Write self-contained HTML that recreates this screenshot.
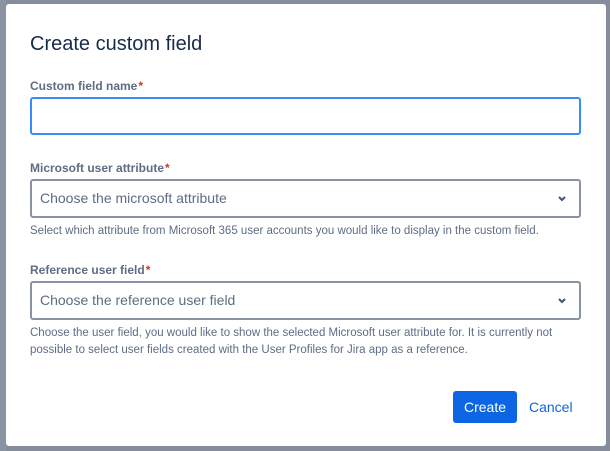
<!DOCTYPE html>
<html><head><style>
*{box-sizing:border-box;margin:0;padding:0}
body{width:610px;height:451px;background:#858d9c;font-family:"Liberation Sans",sans-serif;position:relative;overflow:hidden}
.bg{position:absolute;left:0;top:0;width:6px;height:451px;background:#8a93a2}
.dlg{position:absolute;left:6px;top:4px;width:600px;height:442px;background:#fff;border-radius:3px}
.t{position:absolute;left:24px;top:29px;font-size:20px;color:#172b4d}
.l{position:absolute;left:24px;font-size:12px;font-weight:bold;color:#5e6c84}
.l span{color:#de350b;margin-left:1px}
.in{position:absolute;left:24px;width:551px;border:2px solid #8993a4;border-radius:3px;background:#fff;font-size:14px;color:#5e6c84;padding-left:8px}
.in.f{border-color:#388bff}
.h{position:absolute;left:24px;font-size:11.5px;color:#5e6c84;line-height:17px;width:545px}
.chev{position:absolute;right:12px;top:14px}
.btn{position:absolute;left:447px;top:387px;width:64px;height:32px;background:#0c66e4;border-radius:3px;color:#fff;font-size:14px;text-align:center;line-height:32px}
.c{position:absolute;left:523px;top:387px;line-height:32px;font-size:14px;color:#0c66e4}
</style></head><body>
<div class="bg"></div>
<div class="dlg">
<div class="t">Create custom field</div>
<div class="l" style="top:75px">Custom field name<span>*</span></div>
<div class="in f" style="top:93px;height:38px"></div>
<div class="l" style="top:157px">Microsoft user attribute<span>*</span></div>
<div class="in" style="top:175px;height:39px;line-height:35px">Choose the microsoft attribute<svg class="chev" width="10" height="8" viewBox="0 0 10 8"><path d="M2 2 L5 5 L8 2" stroke="#42526e" stroke-width="2" fill="none"/></svg></div>
<div class="h" style="top:219px">Select which attribute from Microsoft 365 user accounts you would like to display in the custom field.</div>
<div class="l" style="top:259px">Reference user field<span>*</span></div>
<div class="in" style="top:277px;height:39px;line-height:35px">Choose the reference user field<svg class="chev" width="10" height="8" viewBox="0 0 10 8"><path d="M2 2 L5 5 L8 2" stroke="#42526e" stroke-width="2" fill="none"/></svg></div>
<div class="h" style="top:321px">Choose the user field, you would like to show the selected Microsoft user attribute for. It is currently not possible to select user fields created with the User Profiles for Jira app as a reference.</div>
<div class="btn">Create</div>
<div class="c">Cancel</div>
</div>
</body></html>
